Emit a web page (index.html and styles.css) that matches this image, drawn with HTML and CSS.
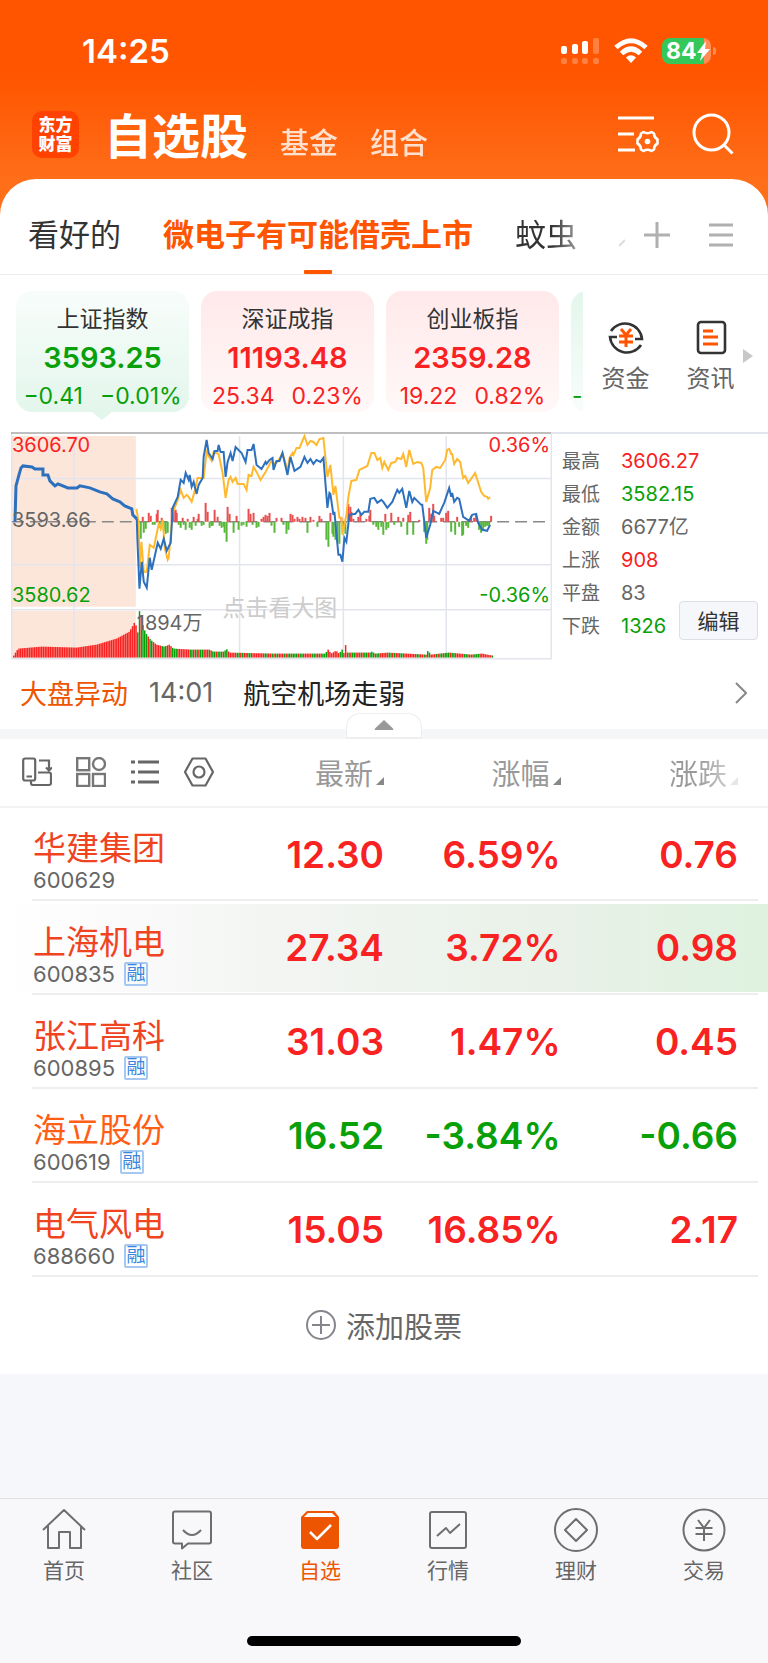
FILE: index.html
```html
<!DOCTYPE html>
<html lang="zh-CN">
<head>
  <meta charset="utf-8">
  <meta name="viewport" content="width=device-width, initial-scale=1">
  <title>自选股</title>
  <link rel="stylesheet" href="styles.css">
</head>
<body>
<header class="top">
  <div class="status">
    <span class="time">14:25</span>
    <div class="status-icons">
      <svg width="40" height="28" viewBox="0 0 40 28" fill="#fff">
        <rect x="1" y="9" width="6" height="8" rx="2"/>
        <rect x="12" y="7" width="6" height="10" rx="2"/>
        <rect x="22" y="4" width="6" height="13" rx="2"/>
        <g opacity=".25">
          <rect x="33" y="1" width="6" height="16" rx="2"/>
          <rect x="1" y="21" width="6" height="6" rx="2"/>
          <rect x="12" y="21" width="6" height="6" rx="2"/>
          <rect x="22" y="21" width="6" height="6" rx="2"/>
          <rect x="33" y="21" width="6" height="6" rx="2"/>
        </g>
      </svg>
      <svg width="34" height="26" viewBox="0 0 34 26" fill="none" stroke="#fff" stroke-width="5">
        <path d="M2 9.500Q17-4 32 9.500"/>
        <path d="M7.500 15.500Q17 6.500 26.500 15.500"/>
        <path d="M12 19.500Q17 15 22 19.500L17 25z" fill="#fff" stroke="none"/>
      </svg>
      <div class="battery"><span>84</span>
        <svg width="13" height="20" viewBox="0 0 13 20" fill="#fff"><path d="M9 0L0 12h5L3 20l10-12H8z"/></svg>
      </div>
    </div>
  </div>
  <div class="nav">
    <div class="logo">东方<br>财富</div>
    <nav class="sections">
      <h1>自选股</h1>
      <a href="#">基金</a>
      <a href="#">组合</a>
    </nav>
    <button class="icon-btn" aria-label="设置">
      <svg width="42" height="40" viewBox="0 0 42 40" fill="none" stroke="#fff" stroke-width="3">
        <path d="M1 4h36M1 20h16M1 36h17"/>
        <path stroke-width="2.600" stroke-linejoin="round" d="M26.500 18q4 2.500 8 0l2.500 1.500q0 4 3.500 6v4q-3.500 2-3.500 6L34.500 37q-4-2.500-8 0L24 35.500q0-4-3.500-6v-4q3.500-2 3.500-6z"/>
        <circle cx="30.500" cy="27.500" r="2.800" fill="#fff" stroke="none"/>
      </svg>
    </button>
    <button class="icon-btn" aria-label="搜索">
      <svg width="42" height="42" viewBox="0 0 42 42" fill="none" stroke="#fff" stroke-width="3">
        <circle cx="19.500" cy="19.500" r="17.500"/>
        <path d="M32 32l8.500 8.500"/>
      </svg>
    </button>
  </div>
</header>

<main class="sheet">
  <div class="tabs">
    <nav class="tab-list">
      <a href="#">看好的</a>
      <a href="#" class="active">微电子有可能借壳上市</a>
      <a href="#" class="cut">蚊虫</a>
      <svg width="6" height="78" viewBox="0 0 6 78" stroke="#ddd" stroke-width="2"><path d="M0 50l6-6"/></svg>
    </nav>
    <button class="icon-btn" aria-label="添加分组">
      <svg width="26" height="26" viewBox="0 0 26 26" stroke="#b0b0b0" stroke-width="3"><path d="M13 0v26M0 13h26"/></svg>
    </button>
    <button class="icon-btn" aria-label="分组列表">
      <svg width="24" height="26" viewBox="0 0 24 26" stroke="#b0b0b0" stroke-width="3"><path d="M0 3h24M0 13h24M0 23h24"/></svg>
    </button>
  </div>

  <section class="indices">
    <div class="cards">
      <article class="card down current">
        <h2>上证指数</h2>
        <strong>3593.25</strong>
        <p><span>−0.41</span><span>−0.01%</span></p>
      </article>
      <article class="card up">
        <h2>深证成指</h2>
        <strong>11193.48</strong>
        <p><span>25.34</span><span>0.23%</span></p>
      </article>
      <article class="card up">
        <h2>创业板指</h2>
        <strong>2359.28</strong>
        <p><span>19.22</span><span>0.82%</span></p>
      </article>
      <article class="card down next">
        <p><span>-</span></p>
      </article>
    </div>
    <a href="#" class="shortcut">
      <svg width="38" height="38" viewBox="0 0 38 38" fill="none" stroke="#333" stroke-width="2.600">
        <path d="M4 12A17 17 0 0 1 35 20h-7M34 26A17 17 0 0 1 3 18h7"/>
        <path stroke="#ff5500" stroke-width="3" d="M14 10l5 6 5-6M12 17h14M12 23h14M19 16v12"/>
      </svg>
      资金
    </a>
    <a href="#" class="shortcut">
      <svg width="38" height="38" viewBox="0 0 38 38" fill="none" stroke="#333" stroke-width="2.600">
        <rect x="6" y="3" width="27" height="31" rx="3"/>
        <path stroke="#ff5500" stroke-width="3" d="M11 12h10M11 18h15M11 25h15"/>
      </svg>
      资讯
    </a>
    <svg class="more" width="10" height="14" viewBox="0 0 10 14" fill="#c8c8c8"><path d="M0 0l10 7-10 7z"/></svg>
  </section>

  <section class="market">
    <svg class="chart" viewBox="0 0 542 228">
      <path fill="#fce6da" d="M1 4h124v171H1zM1 179h124v47H1z"/>
      <path fill="none" stroke="#e3e5ee" stroke-width="1.500" d="M63 4v222M229 4v222M333 4v222M436 4v222M0 46.500h541M0 133h541M0 178h541M.700 0v227.200h540.600V0"/>
      <path stroke="#aaa" stroke-width="1.500" d="M0 1h541"/>
      <text class="hint" x="212" y="184">点击看大图</text>
      <path stroke="#888" stroke-width="1.500" stroke-dasharray="12 6" d="M1 90h540"/>
      <g id="flow"></g>
      <g id="volume"></g>
      <polyline class="line avg" points="125.700,77 127.700,90 129,136 130.700,110 133,140 136,140 139,113 143,116 148,92 150,97 152,88 154,116 157,128 158,126 162,81 167,68 170,58 173,66 176,63 178,65 181,70 183,63 187,46 193,46 196,20 198,24 201,29 203,20 208,22 212,41 215,66 218,48 220,45 222,50 225,46 227,52 233,52 236,58 238,43 241,44 243,35 246,40 250,48 255,40 261,29 263,32 267,30 272,21 275,31 277,40 279,26 282,21 283,23 286,16 289,16 294,4 297,13 300,9 303,10 306,13 309,7 313,6 317,45 320,33 323,63 325,54 329,86 331,86 332,103 336,83 338,65 341,49 346,48 349,38 357,34 361,21 364,21 367,28 370,26 372,36 374,30 378,38 381,31 385,30 387,26 391,27 393,22 396,35 399,18 403,32 407,30 411,31 413,36 416,70 420,56 422,38 426,35 430,36 435,28 437,18 439,17 441,22 442,22 444,32 447,27 450,30 453,46 455,44 458,51 461,47 465,41 471,60 474,64 477,65 478,67 480,65"/>
      <polyline class="line pre" points="4,90 5,54 8,43 10,36 12,34 21,35 24,37 32,37 32,43 37,43 39,49 44,54 47,52 57,56 66,56 69,54 79,56 89,60 96,62 102,67 109,70 114,74 121,77 122,83 126,87"/>
      <polyline class="line price" points="126,87 126.700,110 128.700,157 131,130 133,150 136,156 139,126 141,138 147,111 150,117 153,107 156,119 160,111 162,76 167,65 170,48 173,51 175,41 178,48 179,43 181,55 183,50 186,62 188,53 192,46 193,25 196,8 198,21 202,27 204,19 207,19 208,13 210,20 213,20 215,45 217,30 220,21 222,29 225,15 231,21 235,30 237,18 241,18 243,12 246,33 251,37 255,30 256,32 259,28 262,26 263,38 266,29 269,29 272,21 277,43 280,25 284,39 290,35 294,25 297,31 300,27 303,32 306,28 310,30 313,26 317,76 319,61 320,62 323,83 324,80 328,123 330,123 332,130 334,106 336,110 339,83 345,82 348,78 351,83 354,80 358,80 360,67 364,66 367,71 371,68 373,70 377,76 382,70 387,58 389,61 392,57 396,76 399,59 402,70 404,66 411,73 412,73 416,106 420,93 423,79 429,82 434,71 439,56 441,65 442,61 444,70 447,66 449,67 453,85 459,89 462,83 466,82 468,91 472,98 477,99 480,93"/>
      <text class="red" x="1" y="20">3606.70</text>
      <text x="1" y="95">3593.66</text>
      <text class="green" x="1" y="170">3580.62</text>
      <text class="red" x="540" y="20" text-anchor="end">0.36%</text>
      <text class="green" x="540" y="170" text-anchor="end">-0.36%</text>
      <text x="126" y="198">1894万</text>
    </svg>
    <div class="stats">
      <dl>
        <dt>最高</dt><dd class="red">3606.27</dd>
        <dt>最低</dt><dd class="green">3582.15</dd>
        <dt>金额</dt><dd>6677亿</dd>
        <dt>上涨</dt><dd class="red">908</dd>
        <dt>平盘</dt><dd>83</dd>
        <dt>下跌</dt><dd class="green">1326</dd>
      </dl>
      <button class="edit">编辑</button>
    </div>
  </section>

  <a href="#" class="news">
    <span class="news-tag">大盘异动</span>
    <time>14:01</time>
    <span>航空机场走弱</span>
    <svg width="12" height="22" viewBox="0 0 12 22" fill="none" stroke="#888" stroke-width="2"><path d="M1 1l10 10L1 21"/></svg>
  </a>
  <div class="divider">
    <button class="collapse" aria-label="收起">
      <svg width="20" height="10" viewBox="0 0 20 10" fill="#999"><path d="M10 0l9 8.500q1 1.500-1 1.500H2q-2 0-1-1.500z"/></svg>
    </button>
  </div>

  <table class="stocks">
    <colgroup><col class="c-name"><col class="c-price"><col class="c-pct"><col></colgroup>
    <thead>
      <tr>
        <th>
          <div class="tools">
            <button class="icon-btn" aria-label="横屏">
              <svg width="30" height="30" viewBox="0 0 30 30" fill="none" stroke="#666" stroke-width="2.200">
                <rect x="1.200" y="1.500" width="12" height="22" rx="2"/>
                <path d="M4.500 19.500h5.500M17 3.500h10v9M24 10.500l3 3 3-3M16 15.500h11q2 0 2 2V26q0 2-2 2H11q-2 0-2-2v-2"/>
              </svg>
            </button>
            <button class="icon-btn" aria-label="宫格">
              <svg width="30" height="30" viewBox="0 0 30 30" fill="none" stroke="#777" stroke-width="2.400">
                <rect x="1.200" y="1.200" width="12" height="12"/><circle cx="23" cy="7" r="6"/>
                <rect x="1.200" y="17" width="12" height="12"/><rect x="17" y="17" width="12" height="12"/>
              </svg>
            </button>
            <button class="icon-btn" aria-label="列表">
              <svg width="30" height="30" viewBox="0 0 30 30" fill="none" stroke="#666" stroke-width="3">
                <path d="M1 5h4M8 5h21M1 15h4M8 15h21M1 25h4M8 25h21"/>
              </svg>
            </button>
            <button class="icon-btn" aria-label="表头设置">
              <svg width="30" height="30" viewBox="0 0 30 30" fill="none" stroke="#666" stroke-width="2.200" stroke-linejoin="round">
                <path d="M8.500 1.500h13L29 15l-7.500 13.500h-13L1 15z"/><circle cx="15" cy="15" r="5.500"/>
              </svg>
            </button>
          </div>
        </th>
        <th><button class="sort">最新</button></th>
        <th><button class="sort">涨幅</button></th>
        <th><button class="sort faded">涨跌</button></th>
      </tr>
    </thead>
    <tbody>
      <tr class="red">
        <td><a href="#">华建集团</a><small>600629</small></td>
        <td>12.30</td><td>6.59%</td><td>0.76</td>
      </tr>
      <tr class="red flash">
        <td><a href="#">上海机电</a><small>600835 <i>融</i></small></td>
        <td>27.34</td><td>3.72%</td><td>0.98</td>
      </tr>
      <tr class="red">
        <td><a href="#">张江高科</a><small>600895 <i>融</i></small></td>
        <td>31.03</td><td>1.47%</td><td>0.45</td>
      </tr>
      <tr class="green">
        <td><a href="#" class="orange">海立股份</a><small>600619 <i>融</i></small></td>
        <td>16.52</td><td>-3.84%</td><td>-0.66</td>
      </tr>
      <tr class="red">
        <td><a href="#">电气风电</a><small>688660 <i>融</i></small></td>
        <td>15.05</td><td>16.85%</td><td>2.17</td>
      </tr>
    </tbody>
  </table>

  <button class="add">
    <svg width="30" height="30" viewBox="0 0 30 30" fill="none" stroke="#85858d" stroke-width="2"><circle cx="15" cy="15" r="14"/><path d="M15 6v18M6 15h18"/></svg>
    添加股票
  </button>
</main>

<footer class="bottom">
  <nav class="tabbar">
    <a href="#">
      <svg width="44" height="44" viewBox="0 0 44 44"><path d="M1 22L22 2l21 20M6 18v22h11V24h11v16h11V18"/></svg>
      首页
    </a>
    <a href="#">
      <svg width="44" height="44" viewBox="0 0 44 44"><path d="M5 3.500h34q2 0 2 2v28q0 2-2 2H18l-6 5v-5H5q-2 0-2-2v-28q0-2 2-2zM13 22q9 10 18 0"/></svg>
      社区
    </a>
    <a href="#" class="active">
      <svg width="44" height="44" viewBox="0 0 44 44">
        <path fill="#ee5500" stroke="none" d="M9 3h27l5 6v29q0 3-3 3H6q-3 0-3-3V9z"/>
        <path stroke="#fff" stroke-width="2.500" d="M12 24l7 7 14-14"/>
        <path stroke="none" fill="#fff" d="M10 5h24l4 4H6z"/>
      </svg>
      自选
    </a>
    <a href="#">
      <svg width="44" height="44" viewBox="0 0 44 44"><rect x="4" y="4" width="36" height="36" rx="2"/><path d="M11 28l9-8 4 5 10-9"/></svg>
      行情
    </a>
    <a href="#">
      <svg width="44" height="44" viewBox="0 0 44 44"><circle cx="22" cy="22" r="21"/><path d="M22 11l11 11-11 11-11-11z"/></svg>
      理财
    </a>
    <a href="#">
      <svg width="44" height="44" viewBox="0 0 44 44"><circle cx="22" cy="22" r="20.500"/><path d="M16 12l6 8 6-8M13.500 20h17M13.500 26h17M22 20v13"/></svg>
      交易
    </a>
  </nav>
  <div class="home-bar"></div>
</footer>
<script src="chart.js"></script>
</body>
</html>
```
FILE: styles.css
```css
* {
    box-sizing: border-box;
}

body {
    margin: 0;
    min-height: 100vh;
    display: flex;
    flex-direction: column;
    font-family: Inter, "Noto Sans CJK SC", sans-serif;
    color: #333;
    background: #f6f7fa;
}

a {
    color: inherit;
    text-decoration: none;
}

button {
    padding: 0;
    border: 0;
    background: none;
    font: inherit;
    color: inherit;
}

svg {
    display: block;
    flex: none;
}

h1, h2, p, dl, dd {
    margin: 0;
}

.red {
    color: #f82222;
    fill: #f82222;
}

.green {
    color: #08a008;
    fill: #08a008;
}

.icon-btn {
    display: block;
}

/* header */
.top {
    padding-bottom: 53px;
    background: linear-gradient(#ff5500 76px, #ff6e19 180px);
    color: #fff;
}

.status {
    display: flex;
    justify-content: space-between;
    align-items: center;
    height: 102px;
    padding: 0 52px 0 82px;
}

.time {
    font-size: 33px;
    font-weight: 600;
}

.status-icons {
    display: flex;
    align-items: center;
    gap: 14px;
}

.battery {
    position: relative;
    display: flex;
    align-items: center;
    width: 49px;
    height: 26px;
    margin-right: 5px;
    padding-left: 4px;
    border-radius: 8px;
    background: linear-gradient(90deg, #34c759 42px, #ff8c55 42px);
    font-size: 23px;
    font-weight: 700;
}

.battery::after {
    content: "";
    position: absolute;
    right: -5px;
    top: 9px;
    width: 3px;
    height: 8px;
    border-radius: 0 3px 3px 0;
    background: #ff8c55;
}

.nav {
    display: flex;
    align-items: center;
    height: 64px;
    padding: 0 34px 0 32px;
    gap: 33px;
}

.logo {
    width: 47px;
    height: 47px;
    padding-top: 5px;
    border-radius: 10px;
    background: #ff4200;
    font-size: 17px;
    font-weight: 900;
    line-height: 19px;
    text-align: center;
}

.sections {
    display: flex;
    flex: 1;
    align-items: flex-end;
    gap: 32px;
    margin-left: -8px;
    padding-top: 6px;
    font-size: 29px;
    line-height: 46px;
}

.sections h1 {
    font-size: 48px;
    font-weight: 600;
    line-height: 60px;
}

.sections a {
    opacity: .8;
    font-weight: 500;
}

/* white sheet */
.sheet {
    margin-top: -40px;
    border-radius: 36px 36px 0 0;
    background: #fff;
}

.tabs {
    display: flex;
    align-items: center;
    gap: 39px;
    height: 96px;
    padding: 17px 35px 0 28px;
    border-bottom: 1px solid #ececec;
}

.tab-list {
    display: flex;
    flex: 1;
    gap: 42px;
    margin-right: -20px;
    font-size: 31px;
    line-height: 78px;
    white-space: nowrap;
    overflow: hidden;
}

.tab-list .active {
    position: relative;
    color: #ff5500;
    font-weight: 700;
}

.tab-list .active::after {
    content: "";
    position: absolute;
    left: calc(50% - 14px);
    bottom: 0;
    width: 28px;
    height: 4px;
    border-radius: 1px;
    background: #ff5500;
}

.tab-list .cut {
    background: linear-gradient(90deg, #333 60%, #999);
    background-clip: text;
    color: transparent;
}

/* index cards */
.indices {
    display: flex;
    align-items: center;
    height: 157px;
    padding: 0 15px 0 16px;
}

.cards {
    display: flex;
    flex: 1;
    align-self: stretch;
    gap: 12px;
    padding-top: 16px;
    overflow: hidden;
}

.card {
    position: relative;
    flex: none;
    width: 173px;
    height: 121px;
    padding-top: 12px;
    border-radius: 16px;
    text-align: center;
    white-space: nowrap;
}

.card.up {
    background: linear-gradient(#ffe9ea, #fff8f8);
    color: #f82222;
}

.card.down {
    background: linear-gradient(#f8fdfb, #e3f6ec);
    color: #08a008;
}

.card.current::after {
    content: "";
    position: absolute;
    left: 76px;
    top: 100%;
    border: 10px solid transparent;
    border-top: 8px solid #e3f6ec;
    border-bottom: 0;
}

.card h2 {
    color: #333;
    font-size: 23px;
    font-weight: 400;
    line-height: 32px;
}

.card strong {
    display: block;
    font-size: 29px;
    font-weight: 600;
    line-height: 45px;
}

.card p {
    display: flex;
    justify-content: center;
    gap: 17px;
    font-size: 23px;
    line-height: 32px;
}

.card.next {
    padding: 89px 0 0 1px;
    background: linear-gradient(#e3f6ec, #f8fdfb);
}

.card.next p {
    justify-content: flex-start;
}

.shortcut {
    display: flex;
    flex-direction: column;
    align-items: center;
    gap: 5px;
    width: 85px;
    padding-top: 8px;
    color: #666;
    font-size: 24px;
    line-height: 34px;
}

.more {
    margin: 4px 0 0 -10px;
}

/* chart */
.market {
    display: flex;
    padding-left: 11px;
}

.chart {
    flex: 1;
    min-width: 0;
    overflow: visible;
}

.chart text {
    font-size: 20px;
}

.chart text:not([class]) {
    fill: #666;
}

.chart .hint {
    fill: #ccc;
    font-size: 23px;
}

.line {
    fill: none;
    stroke-width: 2;
}

.avg {
    stroke: #ffb92e;
}

.price, .pre {
    stroke: #2d70bd;
}

.pre {
    stroke-width: 3;
}

.stats {
    display: flex;
    width: 216px;
    padding: 11px 10px 0;
    border-top: 2px solid #e3e5ee;
    color: #666;
}

.stats dl {
    display: grid;
    flex: 1;
    grid-template-columns: 59px 1fr;
    grid-auto-rows: 33px;
    align-content: start;
    align-items: center;
    font-size: 19px;
    line-height: 33px;
    white-space: nowrap;
}

.stats dd {
    font-size: 20px;
}

.edit {
    align-self: flex-end;
    width: 79px;
    height: 39px;
    margin: 0 0 20px -120px;
    border: 1px solid #dcdfe6;
    border-radius: 4px;
    background: #f6f7fa;
    color: #333;
    font-size: 21px;
}

/* news line */
.news {
    display: flex;
    align-items: center;
    height: 69px;
    padding: 0 21px 3px 20px;
    font-size: 27px;
    color: #222;
}

.news-tag {
    color: #ee5500;
}

.news time {
    margin: 0 30px 0 21px;
    color: #666;
}

.news svg {
    margin-left: auto;
}

.divider {
    position: relative;
    height: 10px;
    background: #f5f6f8;
}

.collapse {
    position: absolute;
    left: calc(50% - 38px);
    bottom: 0;
    display: flex;
    justify-content: center;
    align-items: center;
    width: 76px;
    height: 26px;
    border: 1px solid #eee;
    border-bottom-width: 2px;
    border-radius: 14px 14px 0 0;
    background: #fff;
}

/* watch list */
.stocks {
    width: 100%;
    table-layout: fixed;
    border-collapse: collapse;
}

.c-name {
    width: 28%;
}

.c-price {
    width: 22%;
}

.c-pct {
    width: 23%;
}

.stocks th {
    height: 68px;
    padding: 0;
    border-bottom: 2px solid #f3f3f3;
    color: #999;
    font-size: 29px;
    font-weight: 400;
    text-align: right;
}

.tools {
    display: flex;
    gap: 24px;
    padding-left: 22px;
}

.sort::after {
    content: "";
    display: inline-block;
    margin-left: 3px;
    border-left: 8px solid transparent;
    border-bottom: 8px solid #888;
}

.sort.faded {
    background: linear-gradient(90deg, #999 40%, #ddd);
    background-clip: text;
    color: transparent;
}

.sort.faded::after {
    border-bottom-color: #e6e6e6;
}

.stocks tbody tr {
    height: 94px;
    background: linear-gradient(#eee, #eee) 32px 100% / calc(100% - 42px) 2px no-repeat;
}

.stocks tbody .flash {
    background:
        linear-gradient(#eee, #eee) 32px 100% / calc(100% - 42px) 2px no-repeat,
        linear-gradient(90deg, #fff, #f3f5f3 35%, #e8f1e7 75%, #def2df) 0 3px / 100% 88px no-repeat;
}

.stocks td {
    padding: 0;
    font-size: 37px;
    font-weight: 600;
    text-align: right;
}

.stocks th:last-child, .stocks td:last-child {
    padding-right: 30px;
}

.stocks td:first-child {
    padding: 12px 0 0 33px;
    font-weight: 400;
    text-align: left;
}

.stocks td a {
    display: block;
    color: #f0431f;
    font-size: 33px;
    line-height: 40px;
}

.stocks td .orange {
    color: #ff5e14;
}

.stocks small {
    display: flex;
    align-items: center;
    gap: 9px;
    height: 24px;
    color: #666;
    font-size: 22px;
}

.stocks i {
    width: 24px;
    height: 24px;
    border: 2px solid #a5c8f2;
    border-radius: 2px;
    color: #3a86dc;
    font-size: 19px;
    font-style: normal;
    line-height: 20px;
    text-align: center;
}

.add {
    display: flex;
    justify-content: center;
    align-items: center;
    gap: 10px;
    width: 100%;
    height: 97px;
    color: #666;
    font-size: 29px;
}

/* bottom bar */
.bottom {
    margin-top: auto;
    padding: 9px 0 17px;
    border-top: 1px solid #e0e0e3;
    background: #f8f8fb;
}

.tabbar {
    display: grid;
    grid-template-columns: repeat(6, 1fr);
    color: #666;
    font-size: 21px;
    line-height: 24px;
}

.tabbar a {
    display: flex;
    flex-direction: column;
    align-items: center;
    gap: 7px;
}

.tabbar svg {
    fill: none;
    stroke: #6e6e6e;
    stroke-width: 2;
    stroke-linejoin: round;
}

.tabbar .active {
    color: #ee5500;
}

.home-bar {
    width: 274px;
    height: 10px;
    margin: 53px auto 0;
    border-radius: 5px;
    background: #000;
}
```
FILE: chart.js
```js
const RED = '#f82222'
const GREEN = '#08a008'

// money flow per minute: x, height (positive is inflow)
const flow = [
  [130, -17], [132, 5], [133, -11], [135, -7], [138, 9], [140, 6], [142, -3], [144, -3], [146, 8], [147, 12],
  [149, -3], [151, 4], [153, -9], [155, -12], [157, -11], [161, 14], [163, 16], [165, 12], [166, 9], [168, -3],
  [170, -6], [172, 4], [173, -3], [175, -8], [177, 3], [179, -6], [181, -8], [183, 5], [185, -4], [187, 3],
  [188, 8], [191, -4], [193, -3], [195, 19], [197, 10], [199, -6], [201, -4], [202, -4], [204, 12], [207, 5],
  [209, -4], [211, -6], [213, -5], [214, -11], [216, -20], [217, 15], [219, 8], [223, -11], [226, 6], [228, -8],
  [231, -4], [233, -3], [236, -5], [238, 13], [240, 8], [242, -3], [243, 9], [246, -6], [248, -5], [251, 3],
  [253, 5], [255, 7], [257, 6], [259, 9], [261, -4], [264, -11], [266, 4], [271, 4], [273, -3], [276, -12],
  [278, -8], [280, 8], [282, 7], [284, 3], [287, 5], [289, 3], [292, 5], [295, 4], [297, -11], [300, 5],
  [303, 2], [307, -5], [309, 6], [311, 3], [316, -18], [318, -25], [320, 9], [322, -12], [323, -15], [325, -18],
  [327, -20], [329, -22], [331, 4], [333, -8], [335, -12], [338, 18], [340, 15], [341, 10], [343, 3], [348, 5],
  [350, 8], [356, 3], [359, 6], [360, 12], [363, -3], [366, -5], [368, -8], [371, -5], [373, -13], [375, 8],
  [376, -8], [378, -6], [381, 9], [384, -3], [388, 5], [391, -5], [393, 4], [397, -13], [398, 7], [400, 10],
  [403, -13], [409, 2], [414, -10], [416, -22], [417, -18], [419, 14], [421, 8], [423, 18], [424, 6], [431, 4],
  [433, 4], [436, 9], [438, 11], [441, -10], [445, -13], [447, 5], [449, -5], [452, -14], [453, -13], [456, -4],
  [458, -6], [461, 6], [464, 4], [466, 8], [469, -8], [471, -11], [473, -8], [475, -5], [477, -4], [479, -4], [481, 6],
]

// volume outline: x, height
const volume = [
  [2, 2], [5, 7], [7, 9], [30, 11], [65, 10], [85, 13], [105, 19], [118, 26], [124, 37], [126, 18],
  [127, 47], [129, 46], [131, 34], [134, 25], [139, 18], [145, 13], [153, 11], [158, 13], [162, 9], [180, 8], [198, 8],
  [202, 6], [213, 6], [215, 9], [218, 5], [262, 4], [314, 4], [317, 8], [320, 4], [325, 7], [328, 4],
  [331, 8], [333, 4], [334, 15], [336, 5], [359, 5], [361, 6], [364, 4], [377, 5], [415, 3], [417, 7],
  [420, 3], [438, 5], [460, 3], [471, 4], [482, 2],
]
const sides = 'ggrgggrggrrrrrggrgrrgggrrrrrrrggrrgrggrrrgr'

function bar(parent, x, y, width, height, color) {
  const rect = document.createElementNS('http://www.w3.org/2000/svg', 'rect')
  rect.setAttribute('x', x)
  rect.setAttribute('y', y)
  rect.setAttribute('width', width)
  rect.setAttribute('height', height)
  rect.setAttribute('fill', color)
  parent.append(rect)
}

const flowGroup = document.getElementById('flow')
for (const [x, h] of flow) {
  bar(flowGroup, x - 1, h > 0 ? 90 - h : 90, 2, Math.abs(h), h > 0 ? '#e94f50' : '#59b83c')
}

const volumeGroup = document.getElementById('volume')
let n = 0
for (let x = 2; x < 482; x += 1.75) {
  const i = volume.findIndex(p => p[0] > x)
  const [x0, h0] = volume[i - 1]
  const [x1, h1] = volume[i]
  const h = h0 + (h1 - h0) * (x - x0) / (x1 - x0)
  const color = x < 126 || Math.abs(x - 334) < 1 ? RED : sides[n++ % sides.length] === 'g' ? GREEN : RED
  bar(volumeGroup, x, 226 - h, 1.5, h, color)
}
```
